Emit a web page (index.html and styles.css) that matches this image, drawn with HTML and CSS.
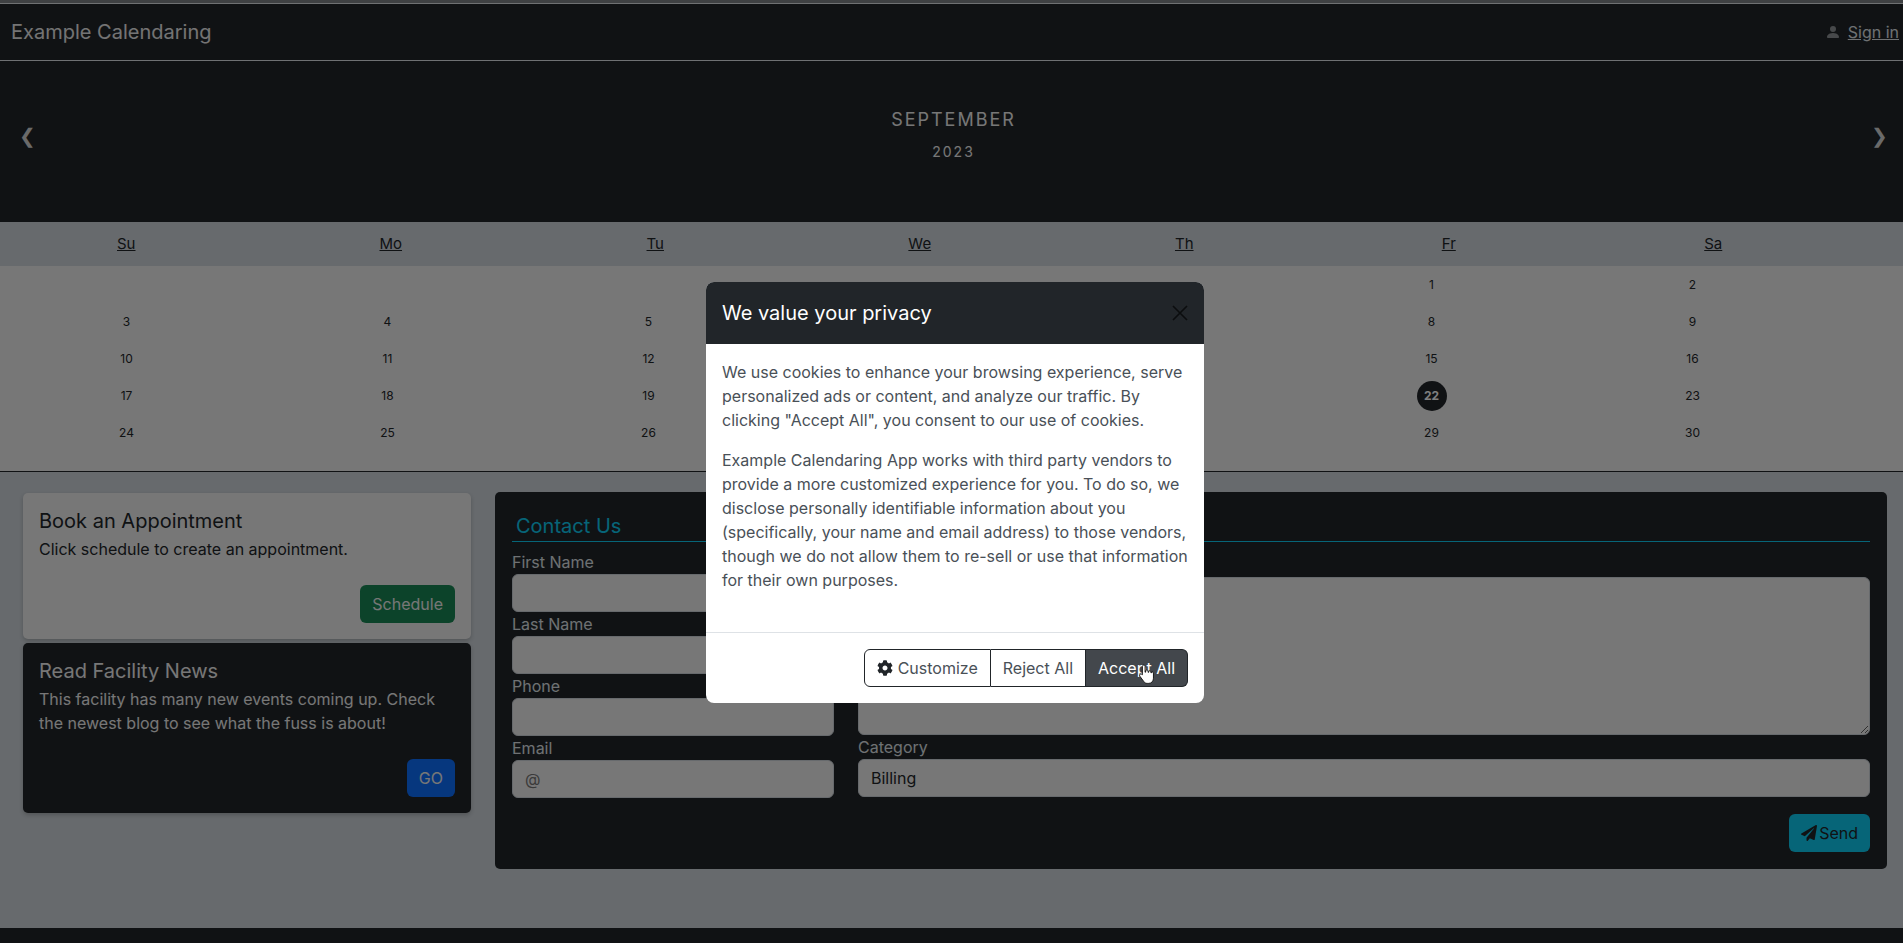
FILE: index.html
```html
<!DOCTYPE html>
<html>
<head>
<title>Example Calendaring</title>
<link rel="stylesheet" href="styles.css">
</head>
<body>

<div class="top-strip"></div>

<nav class="navbar">
  <span class="brand">Example Calendaring</span>
  <span class="signin">
    <svg class="user-icon" viewBox="0 0 16 16"><path d="M3 14s-1 0-1-1 1-4 6-4 6 3 6 4-1 1-1 1H3Zm5-6a3 3 0 1 0 0-6 3 3 0 0 0 0 6Z"/></svg>
    <a href="#">Sign in</a>
  </span>
</nav>

<header class="cal-head">
  <span class="cal-arrow">&#10094;</span>
  <div class="cal-title">
    <div class="cal-month">SEPTEMBER</div>
    <div class="cal-year">2023</div>
  </div>
  <span class="cal-arrow">&#10095;</span>
</header>

<div class="weekdays">
  <a href="#">Su</a><a href="#">Mo</a><a href="#">Tu</a><a href="#">We</a><a href="#">Th</a><a href="#">Fr</a><a href="#">Sa</a>
</div>

<div class="days">
  <span></span><span></span><span></span><span></span><span></span><span>1</span><span>2</span>
  <span>3</span><span>4</span><span>5</span><span>6</span><span>7</span><span>8</span><span>9</span>
  <span>10</span><span>11</span><span>12</span><span>13</span><span>14</span><span>15</span><span>16</span>
  <span>17</span><span>18</span><span>19</span><span>20</span><span>21</span><span class="today">22</span><span>23</span>
  <span>24</span><span>25</span><span>26</span><span>27</span><span>28</span><span>29</span><span>30</span>
</div>

<main class="content">
  <div class="side">
    <div class="card card-light">
      <h5>Book an Appointment</h5>
      <p>Click schedule to create an appointment.</p>
      <div class="card-actions"><button class="btn btn-green">Schedule</button></div>
    </div>
    <div class="card card-dark">
      <h5>Read Facility News</h5>
      <p>This facility has many new events coming up. Check the newest blog to see what the fuss is about!</p>
      <div class="card-actions"><button class="btn btn-blue">GO</button></div>
    </div>
  </div>

  <form class="contact">
    <h4>Contact Us</h4>
    <div class="contact-grid">
      <div class="contact-left">
        <label>First Name</label>
        <input type="text">
        <label>Last Name</label>
        <input type="text">
        <label>Phone</label>
        <input type="text">
        <label>Email</label>
        <input type="text" placeholder="@">
      </div>
      <div class="contact-right">
        <label>Message</label>
        <textarea></textarea>
        <label>Category</label>
        <input type="text" value="Billing">
      </div>
    </div>
    <div class="contact-actions">
      <button type="button" class="btn btn-cyan">
        <svg class="send-icon" viewBox="0 0 512 512"><path d="M476 3.2L12.5 270.6c-18.1 10.4-15.8 35.6 2.2 43.2L121 358.4l287.3-253.2c5.5-4.9 13.3 2.6 8.6 8.3L176 407v80.5c0 23.6 28.5 32.9 42.5 15.8L282 426l124.6 52.2c14.2 6 30.4-2.9 33-18.2l72-432C515 7.8 493.3-6.8 476 3.2z"/></svg>Send
      </button>
    </div>
  </form>
</main>

<footer class="footer">This Example Calendaring App is a fake scheduling application created by The Developer for the purposes of a portfolio demo only.</footer>

<div class="backdrop"></div>

<div class="modal">
  <div class="modal-head">
    <span class="modal-title">We value your privacy</span>
    <svg class="modal-close" viewBox="0 0 16 16"><path d="M1 1l14 14M15 1L1 15"/></svg>
  </div>
  <div class="modal-body">
    <p>We use cookies to enhance your browsing experience, serve personalized ads or content, and analyze our traffic. By clicking "Accept All", you consent to our use of cookies.</p>
    <p>Example Calendaring App works with third party vendors to provide a more customized experience for you. To do so, we disclose personally identifiable information about you (specifically, your name and email address) to those vendors, though we do not allow them to re-sell or use that information for their own purposes.</p>
  </div>
  <div class="modal-foot">
    <div class="btn-group">
      <button class="group-btn">
        <svg class="gear-icon" viewBox="0 0 512 512"><path d="M487.4 315.7l-42.6-24.6c4.3-23.2 4.3-47 0-70.2l42.6-24.6c4.9-2.8 7.1-8.6 5.5-14-11.1-35.6-30-67.8-54.7-94.6-3.8-4.1-10-5.1-14.8-2.3L380.8 110c-17.9-15.4-38.5-27.3-60.8-35.1V25.8c0-5.6-3.9-10.5-9.4-11.7-36.7-8.2-74.3-7.8-109.2 0-5.5 1.2-9.4 6.1-9.4 11.7V75c-22.2 7.9-42.8 19.8-60.8 35.1L88.7 85.5c-4.9-2.8-11-1.9-14.8 2.3-24.7 26.7-43.6 58.9-54.7 94.6-1.7 5.4.6 11.2 5.5 14L67.3 221c-4.3 23.2-4.3 47 0 70.2l-42.6 24.6c-4.9 2.8-7.1 8.6-5.5 14 11.1 35.6 30 67.8 54.7 94.6 3.8 4.1 10 5.1 14.8 2.3l42.6-24.6c17.9 15.4 38.5 27.3 60.8 35.1v49.2c0 5.6 3.9 10.5 9.4 11.7 36.7 8.2 74.3 7.8 109.2 0 5.5-1.2 9.4-6.1 9.4-11.7v-49.2c22.2-7.9 42.8-19.8 60.8-35.1l42.6 24.6c4.9 2.8 11 1.9 14.8-2.3 24.7-26.7 43.6-58.9 54.7-94.6 1.5-5.5-.7-11.3-5.6-14.1zM256 336c-44.1 0-80-35.9-80-80s35.9-80 80-80 80 35.9 80 80-35.9 80-80 80z"/></svg>
        Customize
      </button>
      <button class="group-btn">Reject All</button>
      <button class="group-btn group-btn-dark">Accept All</button>
    </div>
  </div>
</div>

<svg class="hand-cursor" viewBox="0 0 16 22"><path d="M5 1.5c.9 0 1.5.7 1.5 1.6v6l.6-.1V7.8c0-.8.6-1.3 1.3-1.3s1.3.5 1.3 1.3v1.4l.5.1V8.700c0-.7.6-1.200 1.200-1.200s1.300.5 1.300 1.200v1l.4.1c.1-.6.600-1 1.100-1 .7 0 1.200.5 1.200 1.200v5.500c0 3-1.900 5.500-4.900 5.500H8.700c-1.700 0-2.800-.7-3.700-2.100L1 13.500c-.6-.9-.4-1.900.3-2.300.7-.5 1.600-.2 2.200.5l.1.1V3.100c0-.9.500-1.600 1.400-1.600Z"/></svg>

</body>
</html>
```

FILE: styles.css
```css
html, body {
  height: 100%;
  overflow: hidden;
}

body {
  margin: 0;
  font-family: 'Inter', 'Lato', sans-serif;
  font-size: 16px;
  line-height: 24px;
  color: #212529;
  background-color: #ced4da;
}

.top-strip {
  height: 3px;
  background-color: #7f8287;
}

.navbar {
  display: flex;
  align-items: center;
  justify-content: space-between;
  box-sizing: border-box;
  height: 58px;
  padding: 0 4px 0 11px;
  background-color: #212529;
  border-top: 1px solid #dee2e6;
  border-bottom: 1px solid #dee2e6;
}

.brand {
  font-size: 20px;
  color: #e8e8e8;
}

.signin {
  display: flex;
  align-items: center;
  gap: 7px;
  color: #dee2e6;
}

.signin a {
  color: #dee2e6;
}

.user-icon {
  width: 16px;
  height: 16px;
  fill: #8f9396;
}

.cal-head {
  display: flex;
  align-items: center;
  justify-content: space-between;
  height: 161px;
  padding: 0 15px 12px 19px;
  box-sizing: border-box;
  background-color: #212529;
  color: #eeeeee;
}

.cal-arrow {
  font-size: 20px;
  color: #d5d5d5;
}

.cal-title {
  text-align: center;
}

.cal-month {
  font-size: 18px;
  letter-spacing: 2px;
}

.cal-year {
  margin-top: 8px;
  font-size: 14px;
  letter-spacing: 2px;
}

.weekdays {
  display: grid;
  grid-template-columns: repeat(7, 264.5px);
  height: 44px;
  margin-left: -6px;
  align-items: center;
  justify-items: center;
}

.weekdays a {
  color: #212529;
  font-size: 15px;
}

.days {
  display: grid;
  grid-template-columns: repeat(7, 261px);
  grid-auto-rows: 37px;
  height: 205px;
  margin-left: -4px;
  align-items: center;
  justify-items: center;
  font-size: 12px;
  background-color: #eeeeee;
  border-bottom: 1px solid #212529;
}

.today {
  width: 30px;
  height: 30px;
  border-radius: 50%;
  background-color: #212529;
  color: #fff;
  font-weight: 700;
  text-align: center;
  line-height: 30px;
}

.content {
  display: grid;
  grid-template-columns: 448px 1392px;
  gap: 24px;
  align-items: start;
  padding: 20px 16px 59px 23px;
}

.side {
  display: flex;
  flex-direction: column;
  gap: 4px;
  padding-top: 1px;
}

.card {
  padding: 16px;
  border-radius: 5px;
  box-shadow: 0 2px 4px rgba(0, 0, 0, 0.2);
}

.card h5 {
  margin: 0 0 4px;
  font-size: 20px;
  font-weight: 400;
  line-height: 24px;
}

.card p {
  margin: 0 0 16px;
}

.card-light {
  background-color: #eeeeee;
}

.card-dark {
  background-color: #212529;
  color: #eeeeee;
}

.card-actions {
  display: flex;
  justify-content: flex-end;
  padding-top: 8px;
}

.btn {
  height: 38px;
  padding: 0 12px;
  border: none;
  border-radius: 6px;
  font: inherit;
  color: #eeeeee;
}

.btn-green {
  background-color: #198754;
}

.btn-blue {
  background-color: #0d6efd;
}

.btn-cyan {
  display: flex;
  align-items: center;
  gap: 2px;
  background-color: #0dcaf0;
  color: #212529;
}

.send-icon {
  width: 16px;
  height: 16px;
  fill: #212529;
}

.contact {
  box-sizing: border-box;
  height: 377px;
  padding: 20px 17px;
  border-radius: 5px;
  background-color: #212529;
  color: #dee2e6;
}

.contact h4 {
  margin: 0;
  padding: 0 4px 1px;
  font-size: 20px;
  font-weight: 400;
  line-height: 28px;
  color: #0dcaf0;
  border-bottom: 1px solid #0dcaf0;
}

.contact-grid {
  display: grid;
  grid-template-columns: 322px 1012px;
  gap: 24px;
  margin-top: 8px;
}

.contact-left, .contact-right {
  display: flex;
  flex-direction: column;
}

.contact label {
  display: block;
}

.contact input, .contact textarea {
  box-sizing: border-box;
  width: 100%;
  padding: 6px 12px;
  border: 1px solid #ced4da;
  border-radius: 6px;
  background-color: #eeeeee;
  font: inherit;
  color: #212529;
}

.contact input {
  height: 38px;
}

.contact textarea {
  height: 158px;
  margin-top: 3px;
  resize: vertical;
}

.contact-right label:first-child {
  visibility: hidden;
}

.contact-actions {
  display: flex;
  justify-content: flex-end;
  margin-top: 16px;
}

.footer {
  padding-top: 10px;
  height: 60px;
  text-align: center;
  font-size: 14px;
  background-color: #212529;
  color: #dee2e6;
}

.backdrop {
  position: fixed;
  inset: 0;
  background-color: rgba(0, 0, 0, 0.5);
}

.modal {
  position: fixed;
  top: 282px;
  left: 706px;
  width: 498px;
  border-radius: 8px;
  overflow: hidden;
  background-color: #fff;
}

.modal-head {
  display: flex;
  align-items: center;
  justify-content: space-between;
  box-sizing: border-box;
  height: 62px;
  padding: 0 16px;
  background-color: #212529;
  color: #fff;
}

.modal-title {
  font-size: 20px;
}

.modal-close {
  width: 16px;
  height: 16px;
  fill: none;
  stroke: #0b0d0e;
  stroke-width: 1.6;
}

.modal-body {
  padding: 16px 16px 24px;
  color: #495057;
}

.modal-body p {
  margin: 0 0 16px;
}

.modal-foot {
  display: flex;
  justify-content: flex-end;
  padding: 16px;
  border-top: 1px solid #dee2e6;
}

.btn-group {
  display: flex;
}

.group-btn {
  height: 38px;
  padding: 0 12px;
  border: 1px solid #212529;
  border-left: none;
  background-color: #fff;
  font: inherit;
  color: #495057;
}

.group-btn:first-child {
  border-left: 1px solid #212529;
  border-radius: 6px 0 0 6px;
}

.group-btn-dark {
  border-radius: 0 6px 6px 0;
  background-color: #43474c;
  color: #fff;
}

.gear-icon {
  width: 16px;
  height: 16px;
  vertical-align: -2px;
  fill: #212529;
}

.hand-cursor {
  position: fixed;
  top: 663px;
  left: 1139px;
  width: 15px;
  height: 22px;
  fill: #fff;
  stroke: #111;
  stroke-width: 1;
}
```
